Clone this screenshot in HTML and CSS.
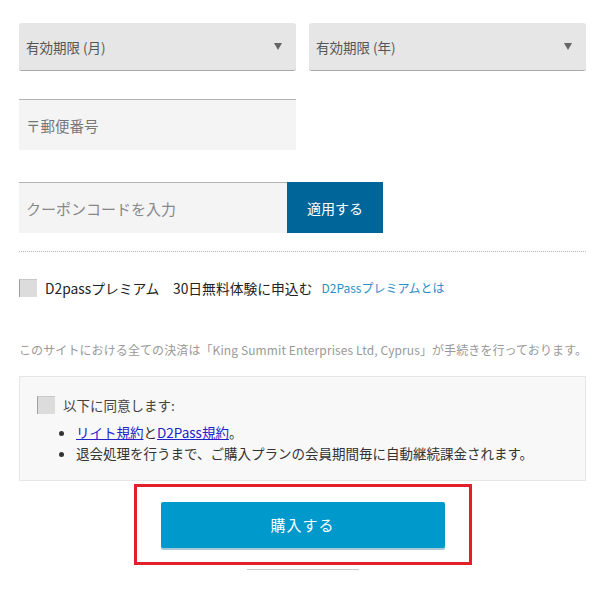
FILE: index.html
```html
<!DOCTYPE html>
<html lang="ja">

<head>
    <meta charset="UTF-8">
    <title>購入</title>
    <link rel="stylesheet" href="styles.css">
</head>

<body>
    <main class="form">
        <div class="row">
            <div class="select">
                <span>有効期限 (月)</span>
                <span class="arrow"></span>
            </div>
            <div class="select">
                <span>有効期限 (年)</span>
                <span class="arrow"></span>
            </div>
        </div>

        <div class="postal">〒郵便番号</div>

        <div class="coupon">
            <div class="coupon-input">クーポンコードを入力</div>
            <button class="coupon-btn">適用する</button>
        </div>

        <hr class="dots">

        <div class="premium">
            <span class="check"></span>
            <span class="premium-text">D2passプレミアム　30日無料体験に申込む</span>
            <a class="premium-link" href="#">D2Passプレミアムとは</a>
        </div>

        <p class="notice">このサイトにおける全ての決済は「King Summit Enterprises Ltd, Cyprus」が手続きを行っております。</p>

        <section class="agree">
            <div class="agree-head">
                <span class="check"></span>
                <span>以下に同意します:</span>
            </div>
            <ul>
                <li><a href="#">リイト規約</a>と<a href="#">D2Pass規約</a>。</li>
                <li>退会処理を行うまで、ご購入プランの会員期間毎に自動継続課金されます。</li>
            </ul>
        </section>

        <div class="buy-wrap">
            <div class="highlight">
                <button class="buy">購入する</button>
            </div>
            <div class="under"></div>
        </div>
    </main>
</body>

</html>
```

FILE: styles.css
```css
body {
    margin: 0;
    background-color: white;
    font-family: "Noto Sans CJK JP", "Noto Sans", sans-serif;
    color: #333;
}

.form {
    width: 567px;
    padding: 23px 0 0 19px;
}

.row {
    display: flex;
    gap: 13px;
}

.select {
    width: 277px;
    height: 48px;
    box-sizing: border-box;
    background-color: #e6e6e6;
    border-bottom: 1px solid #a8a8a8;
    border-radius: 3px;
    padding: 0 14px 0 7px;
    display: flex;
    align-items: center;
    justify-content: space-between;
    font-size: 13.5px;
    color: #555;
}

.arrow {
    width: 0;
    height: 0;
    border-left: 4px solid transparent;
    border-right: 4px solid transparent;
    border-top: 7px solid #666;
}

.postal {
    width: 277px;
    height: 51px;
    box-sizing: border-box;
    margin-top: 28px;
    background-color: #f4f4f4;
    border-top: 1px solid #b3b3b3;
    padding-left: 7px;
    display: flex;
    align-items: center;
    font-size: 14.5px;
    color: #777;
}

.coupon {
    display: flex;
    margin-top: 32px;
    height: 51px;
}

.coupon-input {
    width: 268px;
    box-sizing: border-box;
    background-color: #f4f4f4;
    border-top: 1px solid #b3b3b3;
    padding-left: 7px;
    display: flex;
    align-items: center;
    font-size: 15px;
    color: #888;
}

.coupon-btn {
    width: 96px;
    border: none;
    background-color: #006699;
    color: white;
    font-family: inherit;
    font-size: 14px;
}

.dots {
    margin: 18px 0 0;
    border: none;
    border-top: 1px dotted #b8b8b8;
}

.premium {
    display: flex;
    align-items: center;
    margin-top: 27px;
    line-height: 18px;
    font-size: 13.8px;
}

.check {
    width: 18px;
    height: 18px;
    flex-shrink: 0;
    box-sizing: border-box;
    background-color: #dcdcdc;
    border-left: 1px solid #a0a0a0;
    border-top: 1px solid #c8c8c8;
}

.premium-text {
    margin-left: 8px;
    color: #222;
}

.premium-link {
    margin-left: 9px;
    font-size: 12px;
    color: #2b8fc5;
    text-decoration: none;
}

.notice {
    margin: 44px 0 0;
    line-height: 18px;
    font-size: 12px;
    letter-spacing: 0.1px;
    color: #999;
    white-space: nowrap;
}

.agree {
    margin-top: 17px;
    background-color: #f8f8f8;
    border: 1px solid #e6e6e6;
    padding: 19px 17px 16px;
    font-size: 13.5px;
    color: #333;
}

.agree-head {
    display: flex;
    align-items: center;
    gap: 8px;
    line-height: 18px;
    color: #444;
}

.agree ul {
    margin: 8px 0 0;
    padding-left: 39px;
    line-height: 21px;
}

.agree a {
    color: #2222cc;
}

.buy-wrap {
    display: flex;
    flex-direction: column;
    align-items: center;
    margin-top: 3px;
}

.highlight {
    width: 332px;
    height: 75px;
    border: 3px solid #e2202c;
    display: flex;
    justify-content: center;
    align-items: center;
}

.buy {
    width: 284px;
    height: 46px;
    border: none;
    border-radius: 2px;
    background-color: #0099cc;
    box-shadow: 0 2px 0 #a9c9d9;
    color: white;
    font-family: inherit;
    font-size: 15px;
    letter-spacing: 1px;
}

.under {
    width: 112px;
    height: 1px;
    margin-top: 4px;
    background-color: #c8c8c8;
}
```
